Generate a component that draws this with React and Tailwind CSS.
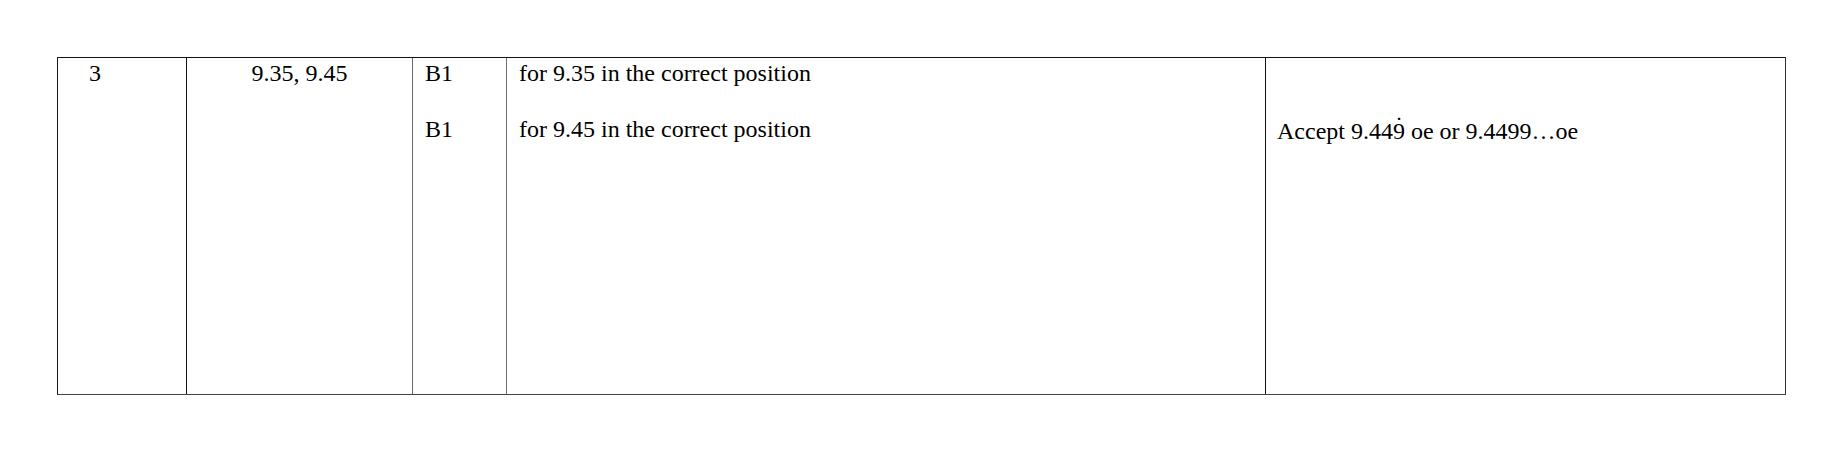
import React from "react";

const rows = [
  { mark: "B1", note: "for 9.35 in the correct position" },
  { mark: "B1", note: "for 9.45 in the correct position" },
];

// recurring digit: 9 with a dot above it
const Recurring = ({ digit }) => (
  <span className="relative inline-block">
    {digit}
    <span className="absolute left-0 right-0 top-[-6px] text-center leading-[28px]">˙</span>
  </span>
);

const App = () => {
  return (
    <div
      className="w-[1843px] h-[452px] bg-white text-black pt-[57px] pl-[57px]"
      style={{ fontFamily: '"Liberation Serif", "Times New Roman", serif' }}
    >
      <div className="flex w-[1729px] h-[338px] border-t border-l border-t-[#111] border-l-[#1a1a1a] border-r border-r-[#333] border-b border-b-[#444] text-[24px] leading-[28px]">
        <div className="w-[129px] shrink-0 border-r border-r-[#111] pt-px pl-[31px]">3</div>

        <div className="w-[226px] shrink-0 border-r border-r-[#6b6b6b] pt-px text-center">
          9.35, 9.45
        </div>

        <div className="w-[94px] shrink-0 border-r border-r-[#6b6b6b] pt-px pl-[12px] flex flex-col gap-[28px]">
          {rows.map((row, i) => (
            <div key={i}>{row.mark}</div>
          ))}
        </div>

        <div className="w-[759px] shrink-0 border-r border-r-[#111] pt-px pl-[12px] flex flex-col gap-[28px]">
          {rows.map((row, i) => (
            <div key={i}>{row.note}</div>
          ))}
        </div>

        <div className="flex-1 pt-[59px] pl-[11px]">
          Accept 9.44<Recurring digit="9" /> oe or 9.4499…oe
        </div>
      </div>
    </div>
  );
};

export default App;
